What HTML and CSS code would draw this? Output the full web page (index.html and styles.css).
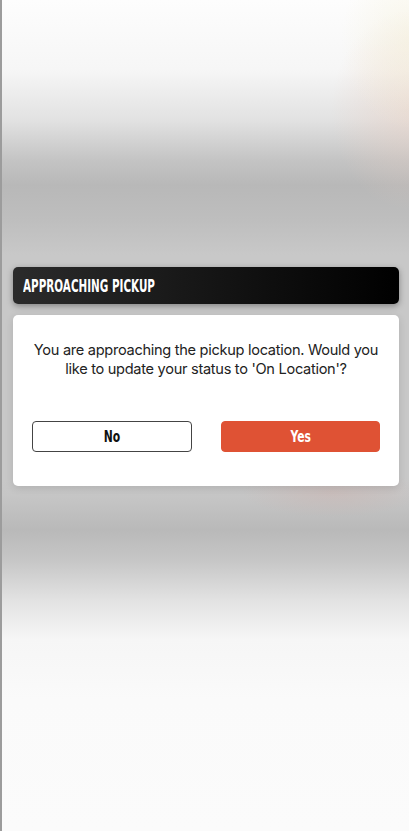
FILE: index.html
```html
<!DOCTYPE html>
<html lang="en">
<head>
    <meta charset="UTF-8">
    <meta name="viewport" content="width=device-width, initial-scale=1.0">
    <title>Approaching Pickup</title>
    <link rel="stylesheet" href="styles.css">
</head>
<body>
    <div class="screen">
        <div class="dialog">
            <div class="dialog-header">
                <h2 class="dialog-title">APPROACHING PICKUP</h2>
            </div>
            <div class="dialog-card">
                <p class="dialog-message">You are approaching the pickup location. Would you like to update your status to 'On Location'?</p>
                <div class="dialog-actions">
                    <button class="btn btn-outline"><span class="btn-label">No</span></button>
                    <button class="btn btn-primary"><span class="btn-label">Yes</span></button>
                </div>
            </div>
        </div>
    </div>
</body>
</html>
```

FILE: styles.css
```css
* {
    box-sizing: border-box;
}
html, body {
    margin: 0;
    padding: 0;
    height: 100%;
}
body {
    font-family: Inter, Roboto, "Noto Sans", sans-serif;
    overflow: hidden;
}
.screen {
    height: 831px;
    border-left: 2px solid #9c9c9c;
    padding: 267px 10px 0 11px;
    background:
        radial-gradient(ellipse 70px 90px at 409px 40px, rgba(245, 240, 215, 0.5), rgba(245, 240, 215, 0) 100%),
        radial-gradient(ellipse 80px 100px at 409px 110px, rgba(235, 205, 190, 0.45), rgba(235, 205, 190, 0) 100%),
        radial-gradient(ellipse 90px 25px at 330px 492px, rgba(205, 175, 170, 0.4), rgba(205, 175, 170, 0) 100%),
        linear-gradient(to bottom,
            #fdfdfd 0px,
            #f6f6f6 70px,
            #e2e2e2 120px,
            #c4c4c4 160px,
            #b8b8b8 185px,
            #bebebe 220px,
            #c8c8c8 255px,
            #c8c8c8 480px,
            #c6c6c6 495px,
            #b9b9b9 530px,
            #c6c6c6 560px,
            #e2e2e2 600px,
            #f6f6f6 640px,
            #fafafa 700px,
            #fbfbfb 831px);
}
.dialog {
    display: flex;
    flex-direction: column;
    gap: 11px;
}
.dialog-header {
    height: 37px;
    border-radius: 5px;
    background: linear-gradient(to right, #2b2b2b, #000);
    box-shadow: 0 2px 6px rgba(0, 0, 0, 0.35);
    display: flex;
    align-items: center;
    padding: 0 10px;
}
.dialog-title {
    margin: 0;
    color: #fff;
    font-family: "DejaVu Sans Condensed", "Liberation Sans Narrow", sans-serif;
    font-weight: bold;
    font-size: 17px;
    white-space: nowrap;
    transform: scaleX(0.68);
    transform-origin: left center;
}
.dialog-card {
    background: #fff;
    border-radius: 5px;
    padding: 26px 19px 34px;
    box-shadow: 0 2px 8px rgba(0, 0, 0, 0.12);
}
.dialog-message {
    margin: 0 -4px 42px;
    text-align: center;
    font-size: 14.6px;
    letter-spacing: -0.3px;
    line-height: 19px;
    color: #222;
}
.dialog-actions {
    display: grid;
    grid-template-columns: 1fr 1fr;
    gap: 29px;
}
.btn {
    height: 31px;
    border-radius: 4px;
    font-family: "DejaVu Sans Condensed", "Liberation Sans Narrow", sans-serif;
    font-weight: bold;
    font-size: 16px;
    cursor: pointer;
}
.btn-label {
    display: inline-block;
    transform: scaleX(0.75);
}
.btn-outline {
    background: #fff;
    border: 1px solid #444;
    color: #111;
}
.btn-primary {
    background: #df5234;
    border: 1px solid #df5234;
    color: #fff;
}
```
